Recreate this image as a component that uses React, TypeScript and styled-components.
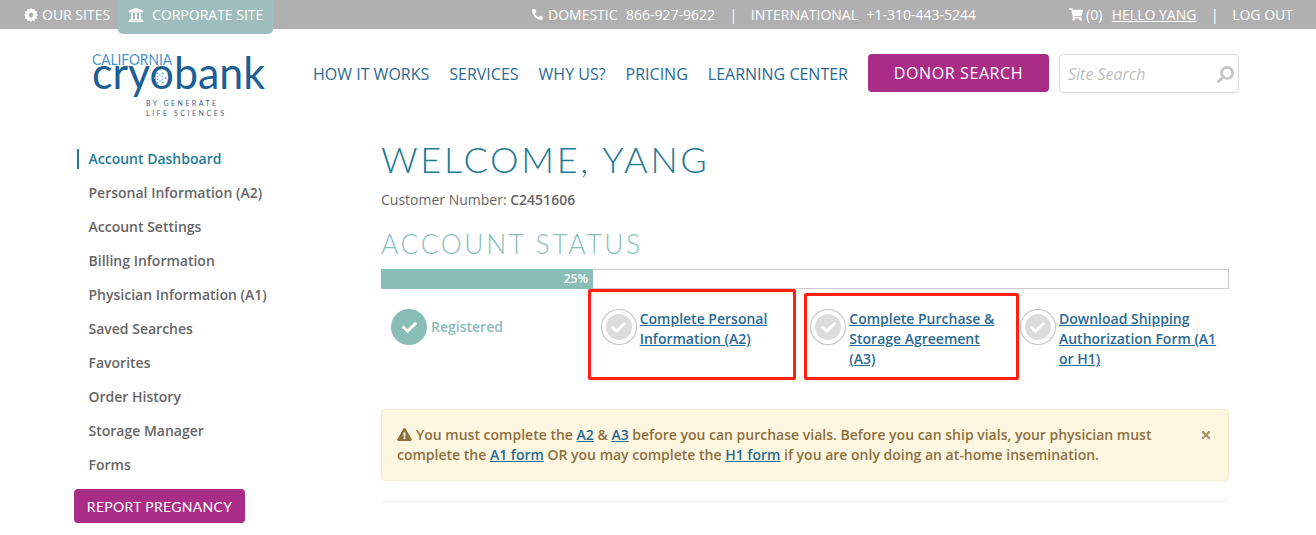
import React from "react";
import styled, { createGlobalStyle } from "styled-components";
import { FaUniversity, FaPhoneAlt, FaShoppingCart, FaSearch, FaCheck, FaTimes, FaExclamationTriangle } from "react-icons/fa";

const Global = createGlobalStyle`
  html, body { margin: 0; padding: 0; background: #fff; }
  body { font-family: "Open Sans", "Liberation Sans", sans-serif; font-size: 14px; color: #666; height: 535px; overflow: hidden; }
  * { box-sizing: border-box; }
`;

const TopBar = styled.div`
  height: 29px; background: #b0b0b0; color: #fff; display: flex; align-items: center;
  font-size: 14px; white-space: nowrap; position: relative;
`;
const Sites = styled.div`
  display: flex; align-items: center; gap: 4px; padding-left: 24px; width: 118px;
  svg { width: 14px; height: 14px; }
`;
const CorporateTab = styled.div`
  width: 155px; height: 34px; margin-bottom: -5px; background: #9fbdbd; border-radius: 0 0 5px 5px;
  display: flex; align-items: center; gap: 8px; padding-left: 10px; padding-bottom: 5px; position: relative; z-index: 1;
  svg { width: 16px; height: 16px; }
`;
const Phones = styled.div`
  display: flex; align-items: center; margin-left: 259px; width: 537px;
  svg { width: 11px; height: 11px; margin-right: 5px; }
`;
const Pipe = styled.span`margin: 0 13.5px 0 14.5px;`;
const Wide = styled.span`margin-left: 8.5px;`;
const Account = styled.div`
  display: flex; align-items: center;
  svg { width: 14px; height: 13px; margin-right: 3px; }
`;
const Hello = styled.a`text-decoration: underline; margin-left: 9.5px; color: #fff;`;

const Header = styled.div`
  height: 100px; display: flex; align-items: flex-start; padding-left: 92px; padding-top: 25px;
`;
const Logo = styled.svg`width: 180px; height: 66px; flex: none; display: block; overflow: visible;`;
const Nav = styled.nav`
  display: flex; gap: 20px; margin-left: 41px; margin-top: 8px; font-size: 16px; line-height: 24px; color: #2a6a94; white-space: nowrap; width: 555px;
`;
const DonorButton = styled.a`
  width: 181px; height: 38px; background: #a92d87; color: #fff; border-radius: 4px; display: flex; align-items: center; justify-content: center;
  font-size: 16px; letter-spacing: 0.6px; flex: none;
`;
const SearchBox = styled.div`
  width: 180px; height: 39px; margin-left: 10px; border: 1px solid #dcdcdc; border-radius: 4px; display: flex; align-items: center; justify-content: space-between;
  padding: 0 4px 0 8px; font-style: italic; font-size: 16px; color: #bdbdbd;
  svg { width: 17px; height: 17px; color: #c4c4c4; transform: scaleX(-1); margin-top: 2px; }
`;

const Body = styled.div`display: flex; align-items: flex-start;`;
const Side = styled.aside`width: 381px; flex: none; padding-left: 74px; padding-top: 13px;`;
const SideItem = styled.a<{ $active?: boolean }>`
  display: block; height: 34px; line-height: 34px; font-weight: 600; font-size: 14px; padding-left: 14.5px;
  color: ${(p) => (p.$active ? "#1e7a96" : "#666")}; position: relative;
  ${(p) => p.$active && `&::before { content: ""; position: absolute; left: 3px; top: 7px; width: 2px; height: 20px; background: #1e7a96; }`}
`;
const ReportButton = styled.a`
  display: flex; width: 171px; height: 34px; margin-top: 7px; background: #a92d87; color: #fff; border-radius: 4px; align-items: center; justify-content: center;
  font-family: Lato, "Open Sans", sans-serif; font-weight: 400; font-size: 14px; letter-spacing: 0.3px;
`;

const Main = styled.main`width: 848px; flex: none; position: relative;`;
const Welcome = styled.h1`
  margin: 7px 0 0; font-family: Lato, sans-serif; font-weight: 300; font-size: 36px; line-height: 46px; letter-spacing: 2.75px; color: #1e7a96; white-space: nowrap;
`;
const Customer = styled.p`margin: 8px 0 0; line-height: 20px; font-size: 14px; color: #666; b { font-weight: 600; }`;
const Status = styled.h2`
  margin: 18px 0 0; font-family: Lato, sans-serif; font-weight: 300; font-size: 26.5px; line-height: 32px; letter-spacing: 2.55px; color: #8bbfba; white-space: nowrap;
`;
const Progress = styled.div`height: 20px; margin-top: 9px; border: 1px solid #ccc; border-left: 0; display: flex;`;
const ProgressFill = styled.div`
  background: #88bdb8; margin: -1px 0; color: #fff; font-size: 12px; font-weight: 600; text-align: right; padding-right: 5px; line-height: 20px;
`;
const Steps = styled.div`display: grid; grid-template-columns: repeat(4, 209.67px); padding: 20px 0 0 10px; height: 120px;`;
const Step = styled.div<{ $done?: boolean }>`
  display: flex; gap: 3px; font-size: 14px; line-height: 20px; font-weight: 600; color: ${(p) => (p.$done ? "#88bdb8" : "#2a6a94")};
`;
const Badge = styled.div<{ $done?: boolean }>`
  width: 36px; height: 36px; flex: none; border-radius: 50%; display: flex; align-items: center; justify-content: center;
  background: ${(p) => (p.$done ? "#88bdb8" : "#dcdcdc")};
  ${(p) => !p.$done && "box-shadow: inset 0 0 0 1px #c4c4c4, inset 0 0 0 5px #fff;"}
  color: #fff;
  svg { width: 15px; height: 15px; }
`;
const StepLabel = styled.span`padding-top: 8px; margin-left: 1px;`;
const StepLink = styled.a`
  text-decoration: underline; color: #2a6a94; display: block; padding-right: 12px;
`;
const RedBox = styled.div`position: absolute; border: 3px solid #ff1f14; border-radius: 2px; pointer-events: none;`;
const Alert = styled.div`
  height: 72px; background: #fdf6e1; border: 1px solid #f8ecc8; border-radius: 4px; padding: 15px 15px; font-size: 14px; line-height: 20px; font-weight: 600; color: #8e6f3e; position: relative;
  a { color: #2a6a94; text-decoration: underline; }
  svg.warn { width: 15px; height: 13px; vertical-align: -1px; margin-right: 4px; }
`;
const Close = styled.span`
  position: absolute; right: 16px; top: 19px; color: #a8946a; display: flex;
  svg { width: 12px; height: 12px; }
`;
const Rule = styled.hr`margin: 20px 0 0; border: 0; border-top: 1px solid #eee;`;

const sideItems = ["Personal Information (A2)", "Account Settings", "Billing Information", "Physician Information (A1)", "Saved Searches", "Favorites", "Order History", "Storage Manager", "Forms"];

const starPoints = Array.from({ length: 24 }, (_, i) => {
  const a = (i * Math.PI) / 12;
  const r = i % 2 ? 5.6 : 7;
  return `${(7 + r * Math.cos(a)).toFixed(2)},${(7 + r * Math.sin(a)).toFixed(2)}`;
}).join(" L");

const flakeDots = Array.from({ length: 6 }, (_, i) => {
  const a = (i * Math.PI) / 3;
  return { x: 68 + 5.5 * Math.cos(a), y: 24 + 5.5 * Math.sin(a), x2: 68 + 3 * Math.cos(a + 0.5), y2: 24 + 3 * Math.sin(a + 0.5) };
});

export default function App() {
  return (
    <>
      <Global />
      <TopBar>
        <Sites>
          <svg viewBox="0 0 14 14"><path fill="#fff" fillRule="evenodd" d={`M${starPoints} Z M7 4.6 a2.4 2.4 0 1 0 0.01 0 Z`} /></svg>
          OUR SITES
        </Sites>
        <CorporateTab><FaUniversity /> CORPORATE SITE</CorporateTab>
        <Phones>
          <FaPhoneAlt /> DOMESTIC <Wide>866-927-9622</Wide><Pipe>|</Pipe>INTERNATIONAL <Wide>+1-310-443-5244</Wide>
        </Phones>
        <Account>
          <FaShoppingCart /> (0) <Hello>HELLO YANG</Hello><Pipe>|</Pipe>LOG OUT
        </Account>
      </TopBar>
      <Header>
        <Logo viewBox="0 0 180 66">
          <text x="0" y="11" fontFamily="Lato, sans-serif" fontSize="14.5" fill="#4a93cc" textLength="80" lengthAdjust="spacingAndGlyphs">CALIFORNIA</text>
          <text x="0" y="35" fontFamily="Lato, sans-serif" fontSize="44" fill="#1c5f96" textLength="173" lengthAdjust="spacingAndGlyphs">cryobank</text>
          {flakeDots.map((d, i) => (
            <g key={i} fill="#6fa8d4">
              <circle cx={d.x} cy={d.y} r="1" />
              <circle cx={d.x2} cy={d.y2} r="0.8" />
            </g>
          ))}
          <text x="54" y="52" fontFamily="Lato, sans-serif" fontSize="7" fill="#44608c" textLength="70">BY GENERATE</text>
          <text x="54" y="62" fontFamily="Lato, sans-serif" fontSize="7" fill="#44608c" textLength="78">LIFE SCIENCES</text>
        </Logo>
        <Nav>
          <a>HOW IT WORKS</a><a>SERVICES</a><a>WHY US?</a><a>PRICING</a><a>LEARNING CENTER</a>
        </Nav>
        <DonorButton>DONOR SEARCH</DonorButton>
        <SearchBox>Site Search<FaSearch /></SearchBox>
      </Header>
      <Body>
        <Side>
          <SideItem $active>Account Dashboard</SideItem>
          {sideItems.map((s) => <SideItem key={s}>{s}</SideItem>)}
          <ReportButton>REPORT PREGNANCY</ReportButton>
        </Side>
        <Main>
          <Welcome>WELCOME, YANG</Welcome>
          <Customer>Customer Number: <b>C2451606</b></Customer>
          <Status>ACCOUNT STATUS</Status>
          <Progress><ProgressFill style={{ width: "25%" }}>25%</ProgressFill></Progress>
          <Steps>
            <Step $done><Badge $done><FaCheck /></Badge><StepLabel>Registered</StepLabel></Step>
            <Step><Badge><FaCheck /></Badge><StepLink>Complete Personal Information (A2)</StepLink></Step>
            <Step><Badge><FaCheck /></Badge><StepLink>Complete Purchase &amp; Storage Agreement (A3)</StepLink></Step>
            <Step><Badge><FaCheck /></Badge><StepLink>Download Shipping Authorization Form (A1 or H1)</StepLink></Step>
          </Steps>
          <RedBox style={{ left: 207, top: 160, width: 208, height: 91 }} />
          <RedBox style={{ left: 423, top: 164, width: 215, height: 87 }} />
          <Alert>
            <FaExclamationTriangle className="warn" />You must complete the <a>A2</a> &amp; <a>A3</a> before you can purchase vials. Before you can ship vials, your physician must<br />
            complete the <a>A1 form</a> OR you may complete the <a>H1 form</a> if you are only doing an at-home insemination.
            <Close><FaTimes /></Close>
          </Alert>
          <Rule />
        </Main>
      </Body>
    </>
  );
}
